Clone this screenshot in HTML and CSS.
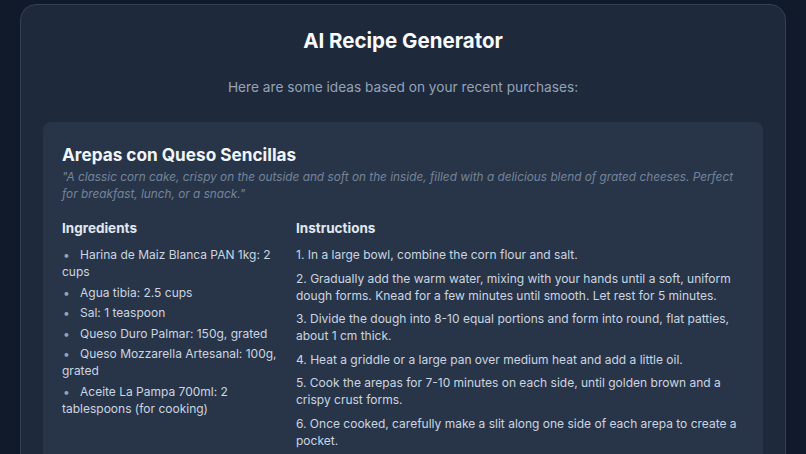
FILE: index.html
```html
<!DOCTYPE html>
<html lang="en">
<head>
<meta charset="utf-8">
<title>AI Recipe Generator</title>
<link rel="stylesheet" href="styles.css">
</head>
<body>
<main class="panel">
  <h1 class="title">AI Recipe Generator</h1>
  <p class="subtitle">Here are some ideas based on your recent purchases:</p>
  <section class="card">
    <h2 class="recipe-name">Arepas con Queso Sencillas</h2>
    <p class="desc">"A classic corn cake, crispy on the outside and soft on the inside, filled with a delicious blend of grated cheeses. Perfect for breakfast, lunch, or a snack."</p>
    <div class="cols">
      <div class="col">
        <h3 class="col-title">Ingredients</h3>
        <ul class="ingredients">
          <li>Harina de Maiz Blanca PAN 1kg: 2 cups</li>
          <li>Agua tibia: 2.5 cups</li>
          <li>Sal: 1 teaspoon</li>
          <li>Queso Duro Palmar: 150g, grated</li>
          <li>Queso Mozzarella Artesanal: 100g, grated</li>
          <li>Aceite La Pampa 700ml: 2 tablespoons (for cooking)</li>
        </ul>
      </div>
      <div class="col">
        <h3 class="col-title">Instructions</h3>
        <ol class="steps">
          <li>1. In a large bowl, combine the corn flour and salt.</li>
          <li>2. Gradually add the warm water, mixing with your hands until a soft, uniform dough forms. Knead for a few minutes until smooth. Let rest for 5 minutes.</li>
          <li>3. Divide the dough into 8-10 equal portions and form into round, flat patties, about 1 cm thick.</li>
          <li>4. Heat a griddle or a large pan over medium heat and add a little oil.</li>
          <li>5. Cook the arepas for 7-10 minutes on each side, until golden brown and a crispy crust forms.</li>
          <li>6. Once cooked, carefully make a slit along one side of each arepa to create a pocket.</li>
        </ol>
      </div>
    </div>
  </section>
</main>
</body>
</html>
```

FILE: styles.css
```css
* { box-sizing: border-box; }
html, body { height: 100%; }
body {
  margin: 0;
  padding: 4px 20px 0;
  background: #111a2b;
  font-family: "Inter", "Lato", sans-serif;
  color: #e5e7eb;
  overflow: hidden;
}
.panel {
  background: #1e293b;
  border: 1px solid #334155;
  border-radius: 16px;
  padding: 22px 22px 40px;
  min-height: 600px;
}
.title {
  margin: 0;
  text-align: center;
  font-size: 20.5px;
  line-height: 28px;
  font-weight: 700;
  color: #f8fafc;
}
.subtitle {
  margin: 22px 0 25px;
  text-align: center;
  font-size: 13.7px;
  line-height: 20px;
  color: #94a3b8;
}
.card {
  background: #283548;
  border-radius: 8px;
  padding: 21px 20px 20px 19px;
}
.recipe-name {
  margin: 0;
  font-size: 17.2px;
  line-height: 24px;
  font-weight: 700;
  color: #f1f5f9;
}
.desc {
  margin: 2px 0 0;
  font-size: 11.8px;
  line-height: 17px;
  font-style: italic;
  color: #74849b;
}
.cols {
  display: grid;
  grid-template-columns: 222px 1fr;
  gap: 12px;
  margin-top: 15px;
}
.col-title {
  margin: 0 0 8px;
  font-size: 13.5px;
  line-height: 20px;
  font-weight: 700;
  color: #e2e8f0;
}
.ingredients, .steps {
  margin: 0;
  padding: 0;
  font-size: 12px;
  line-height: 17px;
  color: #cbd5e1;
}
.ingredients { list-style: none; }
.ingredients li { margin-bottom: 3.5px; }
.ingredients li::before {
  content: "\2022";
  display: inline-block;
  width: 17px;
  padding-left: 1px;
  color: #94a3b8;
}
.steps { list-style: none; }
.steps li { margin-bottom: 6.5px; }
```
